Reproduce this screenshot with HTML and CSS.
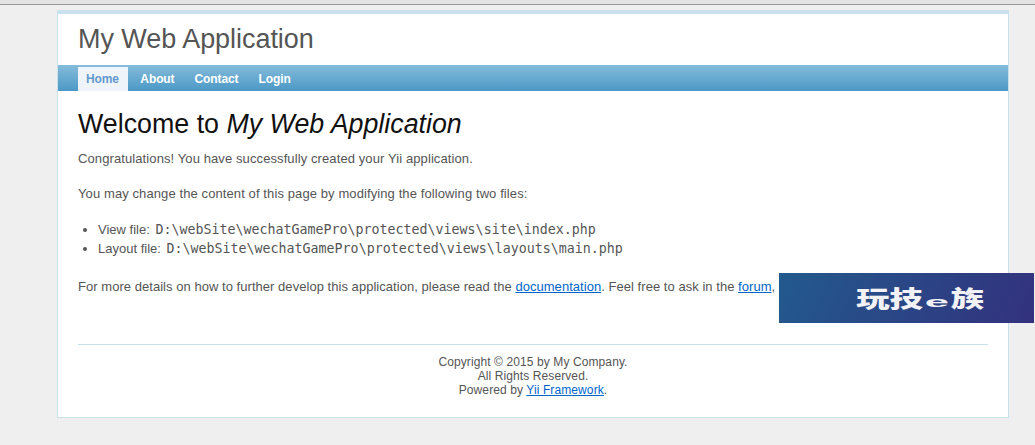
FILE: index.html
```html
<!DOCTYPE html>
<html lang="en">
<head>
<meta charset="utf-8">
<title>My Web Application</title>
<link rel="stylesheet" href="styles.css">
</head>
<body>
<div class="topbar"></div>
<div class="page">
  <div class="header"><div class="logo">My Web Application</div></div>
  <nav class="mainmenu">
    <a class="active" href="#">Home</a>
    <a href="#">About</a>
    <a href="#">Contact</a>
    <a href="#">Login</a>
  </nav>
  <main class="content">
    <h1>Welcome to <i>My Web Application</i></h1>
    <p class="wide">Congratulations! You have successfully created your Yii application.</p>
    <p class="wide">You may change the content of this page by modifying the following two files:</p>
    <ul>
      <li>View file: <code>D:\webSite\wechatGamePro\protected\views\site\index.php</code></li>
      <li>Layout file: <code>D:\webSite\wechatGamePro\protected\views\layouts\main.php</code></li>
    </ul>
    <p class="details">For more details on how to further develop this application, please read the <a href="#">documentation</a>. Feel free to ask in the <a href="#">forum</a>,</p>
  </main>
  <footer class="footer">
    Copyright &copy; 2015 by My Company.<br>
    All Rights Reserved.<br>
    Powered by <a href="#">Yii Framework</a>.
  </footer>
</div>
<div class="banner"><span class="banner-text">玩技<span class="banner-e">e</span>族</span></div>
</body>
</html>
```
FILE: styles.css
```css
html, body { margin: 0; padding: 0; }
body {
  background: #efefef;
  color: #555;
  font: 13px/18px "Liberation Sans", Arial, sans-serif;
  height: 445px;
  overflow: hidden;
}
.topbar {
  height: 4px;
  background: #e3e3e3;
  border-bottom: 1px solid #9a9a9a;
  margin-bottom: 5px;
}
.page {
  width: 950px;
  height: 403px;
  margin: 0 0 0 57px;
  background: #fff;
  border: 1px solid #c9e0ed;
  border-top: 4px solid #c9e0ed;
}
.header { height: 51px; padding: 0 20px; }
.logo { font-size: 27px; line-height: 51px; color: #555; letter-spacing: -0.05px; }
.mainmenu {
  display: flex;
  height: 26px;
  padding: 2px 0 0 20px;
  box-sizing: border-box;
  background: linear-gradient(#85bcdb, #4b98c6);
  font-size: 12px;
  letter-spacing: -0.1px;
}
.mainmenu a {
  display: block;
  padding: 0 10px;
  font-weight: bold;
  line-height: 24px;
  color: #fff;
  text-decoration: none;
}
.mainmenu a.active { background: #eff4fa; color: #6399cd; padding: 0 9.4px 0 8px; margin-right: 2px; }
.content { padding: 0 20px; height: 253px; box-sizing: border-box; overflow: hidden; white-space: nowrap; }
h1 { margin: 17px 0 0; font-size: 26.8px; line-height: 32px; font-weight: normal; color: #111; }
p { margin: 10px 0 17px; }
.wide { letter-spacing: 0.1px; }
.details { letter-spacing: 0.04px; margin-top: 20px; }
ul { margin: 0; padding: 0 0 0 20px; line-height: 19px; }
code { font: 13.3px/19px "DejaVu Sans Mono", monospace; margin-left: 2px; }
a { color: #06c; }
.footer {
  margin: 0 20px;
  padding-top: 10px;
  border-top: 1px solid #c9e0ed;
  text-align: center;
  font-size: 12px;
  letter-spacing: 0.1px;
  line-height: 14px;
}
.banner {
  position: absolute;
  left: 779px;
  top: 273px;
  width: 255px;
  height: 50px;
  background: linear-gradient(115deg, #225a8e, #33317d);
  display: flex;
  justify-content: center;
  align-items: center;
}
.banner-text {
  display: block;
  margin: 0 0 2px 27px;
  color: #f2f2f6;
  font: 900 23px/1 "Noto Sans CJK SC", sans-serif;
  transform: scaleX(1.45);
}
.banner-e {
  display: inline-block;
  width: 19.3px;
  text-align: center;
  font: bold 15px/1 "Liberation Sans", sans-serif;
  transform: scaleX(2);
}
```
